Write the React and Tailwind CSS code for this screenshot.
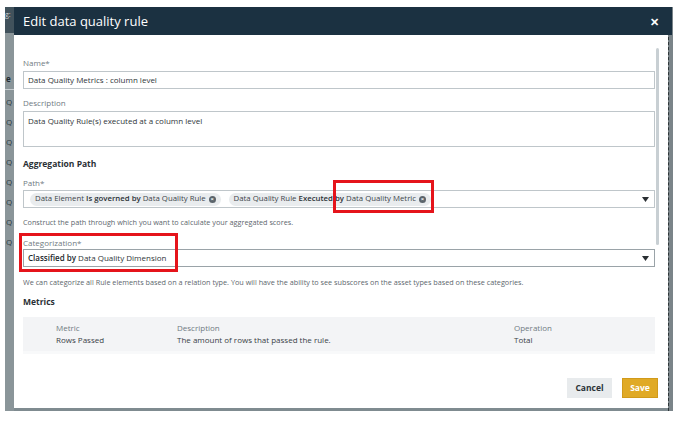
import React from 'react';

// Modal "Edit data quality rule" nad przyciemnionym tłem aplikacji, z czerwonymi ramkami adnotacji.
const FONT = { fontFamily: '"Open Sans", "Noto Sans", Arial, sans-serif' };

function Label({ children, className = '' }) {
    return <div className={`text-[8px] leading-[10px] text-[#707a82] ${className}`}>{children}</div>;
}

function Help({ children, className = '' }) {
    return <div className={`text-[7.25px] leading-[10px] text-[#5d666d] ${className}`}>{children}</div>;
}

function Chip({ a, rel, b }) {
    return (
        <span className="flex items-center h-[13px] px-[5px] rounded-full bg-[#e9ecee] text-[7.8px] text-[#3d454b] whitespace-nowrap">
            {a}&nbsp;<span className="font-semibold text-[#2b3136]">{rel}</span>&nbsp;{b}
            <span className="ml-[3px] w-[7px] h-[7px] rounded-full bg-[#5b646b] text-white text-[6px] leading-[7px] flex items-center justify-center font-bold">×</span>
        </span>
    );
}

function Caret() {
    return (
        <svg width="7" height="5" viewBox="0 0 7 5" className="shrink-0">
            <path d="M0 0 L7 0 L3.5 5 Z" fill="#2a2f33" />
        </svg>
    );
}

export default function App() {
    const qs = [101, 121, 141, 161, 181, 201, 221, 241];
    return (
        <div className="w-[690px] h-[433px] bg-white pt-[7px] pl-[5px]" style={FONT}>
            {/* tło aplikacji pod modalem */}
            <div className="relative flex w-[668px] h-[404px] bg-[#7f8b90]">
                <div className="relative w-[9px] h-full bg-[#8a9599] overflow-hidden">
                    <div className="h-[26px] bg-[#41525c] text-[7px] text-[#c9d0d4] pt-[3px]">g:</div>
                    <div className="mt-[40px] text-[8px] font-bold text-[#1f2a30] pl-[1px]">e</div>
                    <div className="absolute left-0 top-[82px] w-full h-px bg-[#c7cdd0]" />
                    {qs.map(y => (
                        <div key={y} className="absolute left-[1px] text-[8px] text-[#2c3a42]" style={{ top: y - 12 }}>Q</div>
                    ))}
                </div>

                {/* modal */}
                <div className="relative flex flex-col w-[654px] h-[401px] bg-white">
                    <div className="flex items-center justify-between h-[28px] bg-[#1b3141] pl-[9px] pr-[13px] -mr-[4px]">
                        <span className="text-[13px] text-white leading-none">Edit data quality rule</span>
                        <span className="text-[11px] font-bold text-white leading-none">✕</span>
                    </div>

                    <div className="flex-1 pl-[9px] pr-[13px] pt-[23px]">
                        <Label>Name*</Label>
                        <div className="mt-[3px] h-[18px] border border-[#bfc6ca] flex items-center px-[4px] text-[8px] text-[#30363a]">
                            Data Quality Metrics : column level
                        </div>

                        <Label className="mt-[9px]">Description</Label>
                        <div className="mt-[3px] h-[36px] border border-[#bfc6ca] px-[4px] pt-[3px] text-[8px] text-[#30363a]">
                            Data Quality Rule(s) executed at a column level
                        </div>

                        <div className="mt-[12px] text-[8.5px] leading-[10px] font-bold text-[#2a3035]">Aggregation Path</div>

                        <Label className="mt-[9px]">Path*</Label>
                        <div className="mt-[2px] h-[18px] border border-[#bfc6ca] flex items-center pl-[6px] pr-[5px] gap-[8px]">
                            <Chip a="Data Element" rel="Is governed by" b="Data Quality Rule" />
                            <Chip a="Data Quality Rule" rel="Executed by" b="Data Quality Metric" />
                            <div className="flex-1" />
                            <Caret />
                        </div>

                        <Help className="mt-[9px]">Construct the path through which you want to calculate your aggregated scores.</Help>

                        <Label className="mt-[11px]">Categorization*</Label>
                        <div className="mt-[1px] h-[18px] border border-[#9aa3a8] flex items-center px-[4px] pr-[5px] text-[8px] text-[#30363a]">
                            <span className="font-semibold text-[#22282c]">Classified by</span>&nbsp;Data Quality Dimension
                            <div className="flex-1" />
                            <Caret />
                        </div>

                        <Help className="mt-[10px]">We can categorize all Rule elements based on a relation type. You will have the ability to see subscores on the asset types based on these categories.</Help>

                        <div className="mt-[10px] text-[8.5px] leading-[10px] font-bold text-[#2a3035]">Metrics</div>

                        <div className="mt-[10px] h-[37px] bg-[#f3f4f6] border-b-[3px] border-[#f8f9fa] pl-[33px] pt-[5px] text-[8px] leading-[12px]">
                            <div className="flex text-[#707a82]">
                                <div className="w-[121px]">Metric</div>
                                <div className="w-[337px]">Description</div>
                                <div>Operation</div>
                            </div>
                            <div className="flex text-[#3a4146]">
                                <div className="w-[121px]">Rows Passed</div>
                                <div className="w-[337px]">The amount of rows that passed the rule.</div>
                                <div>Total</div>
                            </div>
                        </div>
                    </div>

                    <div className="flex justify-end gap-[10px] pr-[10px] pb-[10px]">
                        <button className="w-[45px] h-[20px] bg-[#e8ebed] text-[8.5px] font-bold text-[#2c3338]">Cancel</button>
                        <button className="w-[36px] h-[20px] bg-[#e0aa26] border border-[#d19a1a] text-[8.5px] font-bold text-white">Save</button>
                    </div>

                    {/* pasek przewijania */}
                    <div className="absolute left-[642px] top-[41px] w-[3px] h-[197px] rounded-full bg-[#c8cfd3]" />

                    {/* ramki adnotacji */}
                    <div className="absolute left-[319px] top-[173px] w-[101px] h-[33px] border-[3px] border-[#e5141b]" />
                    <div className="absolute left-[5px] top-[226px] w-[159px] h-[39px] border-[3px] border-[#e5141b]" />
                </div>

                <div className="w-[5px] h-full bg-[#7a8489] border-l border-dashed border-[#2e3538]" />
            </div>
        </div>
    );
}
